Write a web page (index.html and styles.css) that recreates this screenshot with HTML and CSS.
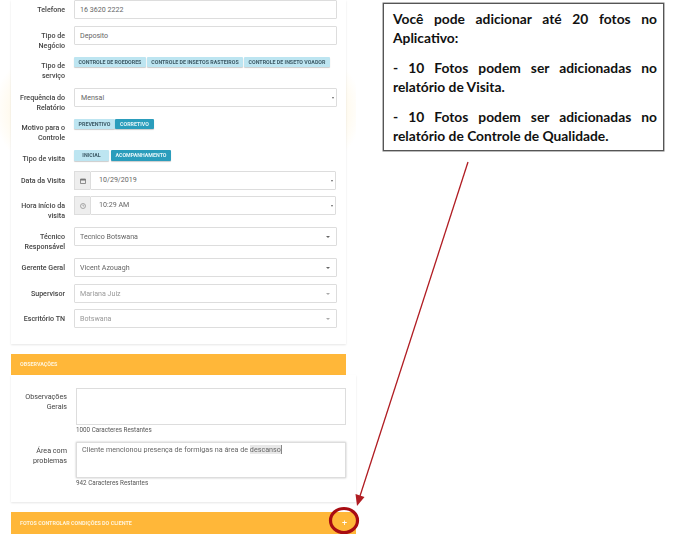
FILE: index.html
```html
<!DOCTYPE html>
<html lang="pt-BR">
<head>
    <meta charset="UTF-8">
    <meta name="viewport" content="width=device-width, initial-scale=1.0">
    <title>Relatório de Visita</title>
    <link rel="stylesheet" href="styles.css">
</head>
<body>
    <div class="page">
        <div class="form-col">
            <div class="card">
                <div class="row loose">
                    <label class="lbl">Telefone</label>
                    <div class="field">16 3620 2222</div>
                </div>
                <div class="row tight">
                    <label class="lbl">Tipo de<br>Negócio</label>
                    <div class="field">Deposito</div>
                </div>
                <div class="row loose">
                    <label class="lbl">Tipo de<br>serviço</label>
                    <div class="btns">
                        <span class="tag w-roe">Controle de roedores</span>
                        <span class="tag w-ras">Controle de insetos rasteiros</span>
                        <span class="tag w-voa">Controle de inseto voador</span>
                    </div>
                </div>
                <div class="row tight">
                    <label class="lbl">Frequência do<br>Relatório</label>
                    <div class="field sel small-arrow"><span class="indent">Mensal</span></div>
                </div>
                <div class="row">
                    <label class="lbl">Motivo para o<br>Controle</label>
                    <div class="btns joined">
                        <span class="tag w-pre">Preventivo</span>
                        <span class="tag on w-cor">Corretivo</span>
                    </div>
                </div>
                <div class="row loose">
                    <label class="lbl">Tipo de visita</label>
                    <div class="btns">
                        <span class="tag tall w-ini">Inicial</span>
                        <span class="tag tall on w-aco">Acompanhamento</span>
                    </div>
                </div>
                <div class="row">
                    <label class="lbl">Data da Visita</label>
                    <div class="group">
                        <span class="addon">
                            <svg width="6" height="6" viewBox="0 0 6 6"><path d="M.5 1h5v4.500h-5z" fill="none" stroke="#777" stroke-width=".8"/><path d="M.5 1h5v1.500h-5z" fill="#777"/></svg>
                        </span>
                        <div class="field sel small-arrow pick">10/29/2019</div>
                    </div>
                </div>
                <div class="row">
                    <label class="lbl">Hora início da<br>visita</label>
                    <div class="group">
                        <span class="addon">
                            <svg width="6" height="6" viewBox="0 0 6 6"><circle cx="3" cy="3" r="2.500" fill="none" stroke="#888" stroke-width=".7"/><path d="M3 1.500V3h1.200" fill="none" stroke="#888" stroke-width=".6"/></svg>
                        </span>
                        <div class="field sel small-arrow pick">10:29 AM</div>
                    </div>
                </div>
                <div class="row">
                    <label class="lbl">Técnico<br>Responsável</label>
                    <div class="field sel">Tecnico Botswana</div>
                </div>
                <div class="row loose">
                    <label class="lbl">Gerente Geral</label>
                    <div class="field sel">Vicent Azouagh</div>
                </div>
                <div class="row">
                    <label class="lbl">Supervisor</label>
                    <div class="field sel off">Mariana Juiz</div>
                </div>
                <div class="row last">
                    <label class="lbl">Escritório TN</label>
                    <div class="field sel off">Botswana</div>
                </div>
            </div>

            <div class="bar">Observações</div>
            <div class="card wide">
                <div class="note">
                    <label class="lbl">Observações<br>Gerais</label>
                    <div class="note-body">
                        <div class="area"></div>
                        <small>1000 Caracteres Restantes</small>
                    </div>
                </div>
                <div class="note">
                    <label class="lbl">Área com<br>problemas</label>
                    <div class="note-body">
                        <div class="area focus">Cliente mencionou presença de formigas na área de <span class="mark">descanso</span></div>
                        <small>942 Caracteres Restantes</small>
                    </div>
                </div>
            </div>

            <div class="bar bar-wide">
                <span>Fotos controlar condições do cliente</span>
                <span class="plus">+</span>
            </div>
        </div>

        <div class="callout">
            <p class="just">Você pode adicionar até 20 fotos no Aplicativo:</p>
            <p class="just">- 10 Fotos podem ser adicionadas no relatório de Visita.</p>
            <p class="just">- 10 Fotos podem ser adicionadas no relatório de Controle de Qualidade.</p>
        </div>
    </div>

    <svg class="overlay" width="677" height="544" viewBox="0 0 677 544">
        <path d="M468 162 360 496" stroke="#b01c22" stroke-width="1.300" fill="none"/>
        <path d="M357 506 355.500 494 364.500 497z" fill="#b01c22"/>
        <ellipse cx="344" cy="520.500" rx="13.500" ry="12" fill="none" stroke="#a80c12" stroke-width="3.200"/>
    </svg>
</body>
</html>
```

FILE: styles.css
```css
html, body {
    margin: 0;
    height: 544px;
    overflow: hidden;
    background: #fff;
}
body {
    font-family: 'Roboto', sans-serif;
    color: #555;
}
.page {
    display: flex;
    align-items: flex-start;
    background: radial-gradient(ellipse 185px 100px at 178px 110px, #fff9ea 88%, #fff 100%) no-repeat;
    background-size: 356px 300px;
}
.form-col {
    width: 356px;
    margin-left: 11px;
    flex-shrink: 0;
    filter: blur(0.3px);
}
.card {
    width: 335px;
    box-sizing: border-box;
    background: #fff;
    padding: 0 9px 16px 0;
    box-shadow: 0 1px 2px rgba(0, 0, 0, 0.1);
}
.row {
    display: flex;
    margin-bottom: 6px;
}
.row.tight { margin-bottom: 5px; }
.row.loose { margin-bottom: 7px; }
.row.last { margin-bottom: 0; }
.lbl {
    width: 54px;
    flex-shrink: 0;
    margin-right: 9px;
    padding-top: 5px;
    text-align: right;
    font-size: 7.1px;
    line-height: 10px;
    font-weight: 500;
    color: #444;
}
.field {
    flex: 1;
    height: 19px;
    box-sizing: border-box;
    padding: 0 5px;
    line-height: 17px;
    font-size: 7.1px;
    color: #666;
    background: #fff;
    border: 1px solid #ddd;
    border-radius: 1px;
    position: relative;
}
.field.off { color: #999; }
.indent { margin-left: 1px; }
.sel::after {
    content: "";
    position: absolute;
    right: 6px;
    top: 8px;
    border-left: 2px solid transparent;
    border-right: 2px solid transparent;
    border-top: 2px solid #666;
}
.sel.off::after { border-top-color: #aaa; }
.small-arrow::after {
    right: 2px;
    border-left-width: 1.500px;
    border-right-width: 1.500px;
}
.btns {
    display: flex;
    gap: 1px;
    margin-top: 1px;
}
.joined { gap: 0; }
.tag {
    height: 10px;
    line-height: 10px;
    text-align: center;
    font-size: 5.3px;
    font-weight: 700;
    text-transform: uppercase;
    color: #3d5a66;
    background: #bde5f1;
    border-radius: 1px;
    box-shadow: 0 1px 1px rgba(0, 0, 0, 0.2);
}
.tag.tall {
    height: 11px;
    line-height: 11px;
}
.tag.on {
    color: #e4f4f8;
    background: #2b9dbc;
}
.w-roe { width: 72px; }
.w-ras { width: 96px; }
.w-voa { width: 86px; }
.w-pre { width: 41px; }
.w-cor { width: 39px; }
.w-ini { width: 35px; margin-right: 1px; }
.w-aco { width: 60px; }
.group {
    flex: 1;
    display: flex;
    margin-right: 1px;
}
.addon {
    width: 16px;
    height: 19px;
    box-sizing: border-box;
    display: flex;
    align-items: center;
    justify-content: center;
    background: #eee;
    border: 1px solid #ddd;
    border-right: none;
}
.pick {
    padding-left: 8px;
    line-height: 15px;
}
.bar {
    width: 335px;
    height: 21px;
    margin-top: 10px;
    padding: 0 9px;
    box-sizing: border-box;
    background: #ffb739;
    color: #fff3d9;
    font-size: 5.4px;
    font-weight: 700;
    line-height: 21px;
    text-transform: uppercase;
}
.bar-wide {
    width: 345px;
    height: 22px;
    display: flex;
    justify-content: space-between;
    line-height: 22px;
}
.plus {
    font-size: 9px;
    font-weight: 400;
    color: #fff;
}
.card.wide {
    width: 345px;
    padding: 13px 10px 14px 0;
}
.note {
    display: flex;
    margin-bottom: 7px;
}
.note:last-child { margin-bottom: 0; }
.note .lbl {
    width: 56px;
    margin-right: 9px;
    padding-top: 4px;
    font-size: 7.2px;
    font-weight: 400;
}
.note-body {
    flex: 1;
}
.area {
    height: 37px;
    box-sizing: border-box;
    padding: 2px 5px;
    border: 1px solid #ddd;
    font-size: 7.2px;
    line-height: 10px;
    color: #666;
}
.area.focus {
    height: 36px;
    box-shadow: 0 0 2px rgba(0, 0, 0, 0.25);
}
.mark {
    background: #e8e8e8;
    border-right: 1px solid #888;
}
small {
    display: block;
    margin-top: 1px;
    font-size: 6.3px;
    line-height: 9px;
    color: #555;
}
.callout {
    width: 281px;
    height: 148px;
    box-sizing: border-box;
    margin: 3px 0 0 16px;
    padding: 5px 6px 0 9px;
    border: 1px solid #555;
    box-shadow: 0 0 0 .5px #777;
    font-family: 'Lato', sans-serif;
    font-size: 13.8px;
    font-weight: 700;
    line-height: 19px;
    color: #111;
}
.just {
    margin: 0 0 11px;
    text-align: justify;
}
.overlay {
    position: absolute;
    left: 0;
    top: 0;
    pointer-events: none;
}
```
